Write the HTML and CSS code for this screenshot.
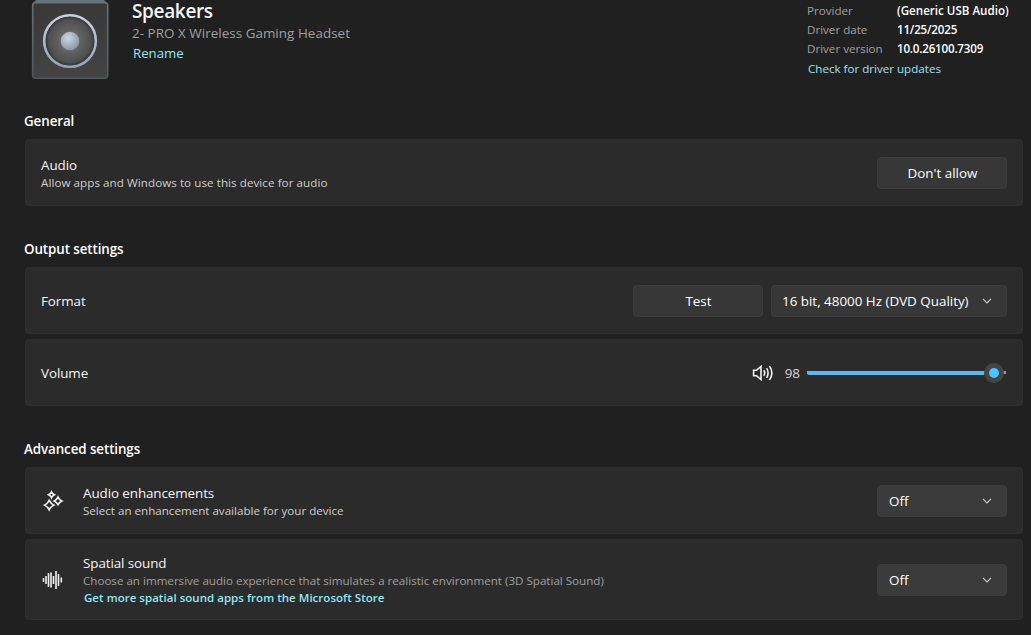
FILE: index.html
```
<!DOCTYPE html>
<html lang="en">
<head>
  <meta charset="UTF-8">
  <title>Speakers</title>
  <link rel="stylesheet" href="styles.css">
</head>
<body>
  <header class="device">
    <svg class="device-icon" width="78" height="80" viewBox="0 0 78 80">
      <defs>
        <linearGradient id="box" x1="0" y1="0" x2="0" y2="1">
          <stop offset="0" stop-color="#383838"/>
          <stop offset="1" stop-color="#444444"/>
        </linearGradient>
        <linearGradient id="edge" x1="0" y1="0" x2="0" y2="1">
          <stop offset="0" stop-color="#68727c"/>
          <stop offset="1" stop-color="#50565c"/>
        </linearGradient>
        <linearGradient id="ring" x1="0" y1="0" x2="0" y2="1">
          <stop offset="0" stop-color="#c8d0dc"/>
          <stop offset="1" stop-color="#98a3b2"/>
        </linearGradient>
        <radialGradient id="cone">
          <stop offset="0.3" stop-color="#686868"/>
          <stop offset="0.8" stop-color="#505050"/>
          <stop offset="1" stop-color="#3d3f42"/>
        </radialGradient>
        <radialGradient id="cap" cx="0.4" cy="0.35" r="0.65">
          <stop offset="0" stop-color="#cbd6e2"/>
          <stop offset="1" stop-color="#8d99a6"/>
        </radialGradient>
      </defs>
      <path d="M5 0H73L77 4H1Z" fill="#65717c"/>
      <rect x="1.7" y="2.7" width="75" height="75.6" rx="3" fill="url(#box)" stroke="url(#edge)" stroke-width="1.6"/>
      <circle cx="39" cy="41" r="25.8" fill="url(#cone)" stroke="url(#ring)" stroke-width="2.6"/>
      <circle cx="39" cy="41" r="23.5" fill="none" stroke="#3a3e44" stroke-width="1.6"/>
      <circle cx="39" cy="41" r="9.3" fill="url(#cap)"/>
    </svg>
    <div class="device-name">
      <h1>Speakers</h1>
      <p class="model">2- PRO X Wireless Gaming Headset</p>
      <a class="rename">Rename</a>
    </div>
    <div class="driver">
      <dl>
        <dt>Provider</dt><dd>(Generic USB Audio)</dd>
        <dt>Driver date</dt><dd class="number">11/25/2025</dd>
        <dt>Driver version</dt><dd class="number">10.0.26100.7309</dd>
      </dl>
      <a class="updates">Check for driver updates</a>
    </div>
  </header>

  <section class="general">
    <h2>General</h2>
    <div class="card">
      <div class="text">
        <h3>Audio</h3>
        <p>Allow apps and Windows to use this device for audio</p>
      </div>
      <button class="btn">Don't allow</button>
    </div>
  </section>

  <section class="output">
    <h2>Output settings</h2>
    <div class="card">
      <div class="text"><h3>Format</h3></div>
      <button class="btn">Test</button>
      <button class="btn dropdown format"><span>16 bit, 48000 Hz (DVD Quality)</span>
        <svg width="10" height="6" viewBox="0 0 10 6"><path d="M1 .8L5 4.8L9 .8"/></svg>
      </button>
    </div>
    <div class="card">
      <div class="text"><h3>Volume</h3></div>
      <svg class="volume-icon" width="22" height="18" viewBox="0 0 22 18">
        <path d="M1.6 6.2H4.6L9 2.4V15.6L4.6 11.8H1.6Z"/>
        <path d="M11.8 6.2Q13.6 9 11.8 11.8M14.6 4.2Q17.6 9 14.6 13.8M17.4 2Q22.4 9 17.4 16"/>
      </svg>
      <span class="volume-value">98</span>
      <div class="slider">
        <div class="fill"></div>
        <div class="thumb"></div>
      </div>
    </div>
  </section>

  <section class="advanced">
    <h2>Advanced settings</h2>
    <div class="card">
      <svg class="row-icon" width="22" height="22" viewBox="0 0 22 22">
        <path d="M9.5 1.9Q10.4 3.9 12.4 4.8Q10.4 5.7 9.5 7.7Q8.6 5.7 6.6 4.8Q8.6 3.9 9.5 1.9Z"/>
        <path d="M16 7.1Q17.2 9.7 19.8 10.9Q17.2 12.1 16 14.7Q14.8 12.1 12.2 10.9Q14.8 9.7 16 7.1Z"/>
        <path d="M7.2 10.4Q8.7 13.6 11.9 15.1Q8.7 16.6 7.2 19.8Q5.7 16.6 2.5 15.1Q5.7 13.6 7.2 10.4Z"/>
      </svg>
      <div class="text">
        <h3>Audio enhancements</h3>
        <p>Select an enhancement available for your device</p>
      </div>
      <button class="btn dropdown"><span>Off</span>
        <svg width="10" height="6" viewBox="0 0 10 6"><path d="M1 .8L5 4.8L9 .8"/></svg>
      </button>
    </div>
    <div class="card tall">
      <svg class="row-icon" width="22" height="22" viewBox="0 0 22 22">
        <path d="M1.5 9V13M4 7V15M6.5 4V18M9 3.5V18.5M11.5 7V15M14 2V20M16.5 5V17M19.3 8.5V13.5"/>
      </svg>
      <div class="text">
        <h3>Spatial sound</h3>
        <p class="dim">Choose an immersive audio experience that simulates a realistic environment (3D Spatial Sound)</p>
        <a class="store">Get more spatial sound apps from the Microsoft Store</a>
      </div>
      <button class="btn dropdown"><span>Off</span>
        <svg width="10" height="6" viewBox="0 0 10 6"><path d="M1 .8L5 4.8L9 .8"/></svg>
      </button>
    </div>
  </section>
</body>
</html>
```
FILE: styles.css
```
* {
  box-sizing: border-box;
}
html {
  background: #202020;
}
body {
  margin: 0;
  padding: 0 8px 0 25px;
  height: 635px;
  overflow: hidden;
  font-family: "Open Sans", "Noto Sans", sans-serif;
  color: #f5f5f5;
  white-space: nowrap;
}
h1, h2, h3, p, dl, dd {
  margin: 0;
}
a {
  display: block;
  width: max-content;
  color: #99e4f3;
}
.device {
  display: flex;
  height: 111px;
}
.device-icon {
  margin-left: 6px;
}
.device-name {
  margin: -1px 0 0 23px;
  flex: 1;
}
h1 {
  font-size: 19px;
  font-weight: 600;
  line-height: 24px;
  letter-spacing: -0.35px;
}
.model {
  font-size: 13.4px;
  line-height: 20px;
  letter-spacing: 0.05px;
  color: #a0a0a0;
}
.rename {
  margin-left: 1px;
  font-size: 13.2px;
  line-height: 20px;
}
.driver {
  width: 216px;
  font-size: 11.6px;
}
dl {
  display: grid;
  grid-template-columns: 90px auto;
  grid-auto-rows: 19px;
  line-height: 19px;
  padding-top: 1px;
}
dt {
  color: #a0a0a0;
}
dd {
  font-weight: 600;
  color: #fff;
}
.number {
  letter-spacing: -0.2px;
}
.updates {
  margin: 1px 0 0 1px;
  line-height: 19px;
}
h2 {
  margin-left: -1px;
  height: 28px;
  font-size: 13.4px;
  font-weight: 600;
  line-height: 20px;
  letter-spacing: -0.1px;
  color: #fff;
}
.output, .advanced {
  margin-top: 33px;
}
.card {
  display: flex;
  align-items: center;
  height: 67px;
  padding: 0 16px;
  background: #2b2b2b;
  border: 1px solid #2e2e2e;
  border-radius: 4px;
}
.card + .card {
  margin-top: 5px;
}
.text {
  flex: 1;
  min-width: 0;
  margin-left: -1px;
}
.row-icon + .text {
  margin-left: 19px;
}
h3 {
  font-size: 13.4px;
  font-weight: 400;
  line-height: 18px;
  letter-spacing: -0.08px;
}
.text p {
  font-size: 11.6px;
  line-height: 17px;
  color: #cfcfcf;
}
.general .text, .advanced .card:not(.tall) .text {
  padding-top: 2px;
}
.general .text p {
  letter-spacing: 0.07px;
}
.text .dim {
  color: #a0a0a0;
}
.store {
  margin-left: 1px;
  font-size: 11.5px;
  font-weight: 600;
  line-height: 17px;
  letter-spacing: 0.03px;
}
.tall {
  height: 81px;
}
.btn {
  width: 130px;
  height: 32px;
  margin-right: -1px;
  padding: 0 12px 0 13px;
  background: #373737;
  border: 1px solid #3c3c3c;
  border-radius: 4px;
  color: #fff;
  font-family: inherit;
  font-size: 13.4px;
}
.btn + .btn {
  margin-left: 9px;
}
.dropdown {
  display: flex;
  align-items: center;
  justify-content: space-between;
  padding: 0 14px 0 11px;
}
.advanced .dropdown {
  background: #3b3b3b;
}
.format {
  width: 236px;
  padding-left: 10px;
}
.dropdown svg {
  fill: none;
  stroke: #c8c8c8;
  stroke-width: 1.2;
}
.volume-icon {
  fill: none;
  stroke: #f0f0f0;
  stroke-width: 1.6;
}
.volume-value {
  margin: 0 7px 0 11px;
  font-size: 13.4px;
  color: #d5d5d5;
}
.slider {
  display: flex;
  align-items: center;
  width: 200px;
  height: 20px;
  margin-right: -1px;
  border-radius: 2px;
  background: linear-gradient(#9a9a9a, #9a9a9a) left center / 199px 3px no-repeat;
}
.fill {
  width: 177px;
  height: 4px;
  border-radius: 2px 0 0 2px;
  background: #5fb8ed;
}
.thumb {
  width: 20px;
  height: 20px;
  border: 5px solid #454545;
  border-radius: 50%;
  background: #4cc2ff;
}
.row-icon {
  fill: none;
  stroke: #f2f2f2;
  stroke-width: 1.6;
}
```
